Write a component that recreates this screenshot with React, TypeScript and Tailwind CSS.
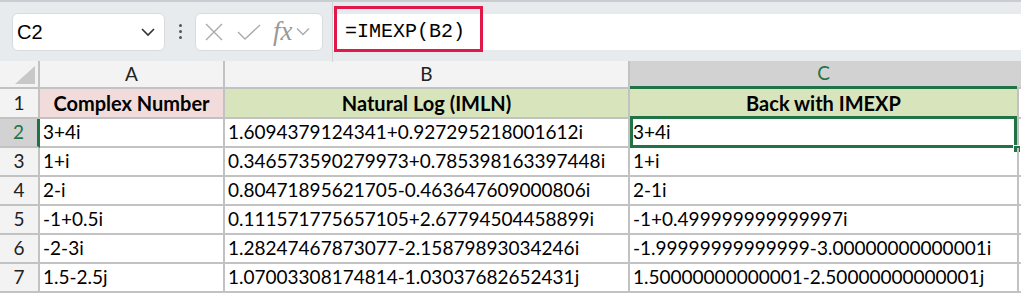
import React from 'react';

const rows = [
  ['3+4i', '1.6094379124341+0.927295218001612i', '3+4i'],
  ['1+i', '0.346573590279973+0.785398163397448i', '1+i'],
  ['2-i', '0.80471895621705-0.463647609000806i', '2-1i'],
  ['-1+0.5i', '0.111571775657105+2.67794504458899i', '-1+0.499999999999997i'],
  ['-2-3i', '1.28247467873077-2.15879893034246i', '-1.99999999999999-3.00000000000001i'],
  ['1.5-2.5j', '1.07003308174814-1.03037682652431j', '1.50000000000001-2.50000000000001j'],
];

const cellFont = { fontFamily: 'Lato, "Open Sans", sans-serif' };

const Toolbar: React.FC = () => (
  <div className="h-[61px] bg-[#e8ebee] border-t-2 border-[#c9ccd0] flex items-center relative">
    <div className="ml-[12px] w-[153px] h-[38px] bg-white rounded-[6px] border border-[#d9dcdf] flex items-center justify-between pl-[4px] pr-[8px]">
      <span className="text-[20px] text-black" style={{ fontFamily: '"Liberation Sans", sans-serif' }}>C2</span>
      <svg width="16" height="10" viewBox="0 0 16 10" fill="none" stroke="#333" strokeWidth="1.6">
        <path d="M2 2l6 6 6-6" />
      </svg>
    </div>
    <div className="w-[30px] flex flex-col items-center gap-[3px]">
      <span className="w-[3px] h-[3px] rounded-full bg-[#555]" />
      <span className="w-[3px] h-[3px] rounded-full bg-[#555]" />
      <span className="w-[3px] h-[3px] rounded-full bg-[#555]" />
    </div>
    <div className="w-[128px] h-[38px] bg-white rounded-[6px] border border-[#d9dcdf] flex items-center pl-[9px] gap-[14px]">
      <svg width="18" height="18" viewBox="0 0 18 18" stroke="#aaa" strokeWidth="1.4" fill="none">
        <path d="M1 1l16 16M17 1L1 17" />
      </svg>
      <svg width="24" height="18" viewBox="0 0 24 18" stroke="#aaa" strokeWidth="1.4" fill="none">
        <path d="M1 9l7 7L23 2" />
      </svg>
      <div className="flex items-center gap-[3px] -ml-[2px]">
        <span className="text-[27px] italic text-[#999] leading-none" style={{ fontFamily: '"Liberation Serif", serif' }}>fx</span>
        <svg width="14" height="9" viewBox="0 0 14 9" stroke="#aaa" strokeWidth="1.4" fill="none">
          <path d="M1 1.5l6 6 6-6" />
        </svg>
      </div>
    </div>
    <div className="ml-[9px] w-[1px] h-[61px] bg-[#d0d3d6]" />
    <div className="flex-1 h-[36px] bg-white flex items-center relative">
      <div className="absolute left-[1px] top-[-8px] w-[149px] h-[46px] border-[3px] border-[#e0194a]" />
      <span className="ml-[12px] text-[20px] text-black" style={{ fontFamily: '"Liberation Mono", monospace' }}>=IMEXP(B2)</span>
    </div>
  </div>
);

const colW = ['w-[185px]', 'w-[405px]', 'w-[387px]'];

const App: React.FC = () => {
  return (
    <div className="w-[1021px] h-[298px] overflow-hidden bg-white">
      <Toolbar />
      {/* column headers */}
      <div className="flex h-[28px] bg-[#f3f3f3]" style={cellFont}>
        <div className="w-[40px] border-r-2 border-b-2 border-[#c2c2c2] relative">
          <svg className="absolute left-[15px] top-[5px]" width="20" height="18" viewBox="0 0 20 18">
            <path d="M20 0V18H0Z" fill="#c8c8c8" />
          </svg>
        </div>
        <div className={`${colW[0]} border-r-2 border-b-2 border-[#c2c2c2] flex items-center justify-center text-[19px] text-[#222]`}>A</div>
        <div className={`${colW[1]} border-r-2 border-b-2 border-[#c2c2c2] flex items-center justify-center text-[19px] text-[#222]`}>B</div>
        <div className={`${colW[2]} bg-[#d2d2d2] border-b-[3px] border-[#217346] flex items-center justify-center text-[19px] text-[#217346]`}>C</div>
        <div className="w-[4px] bg-[#d2d2d2] border-b-2 border-[#c2c2c2]" />
        <div className="flex-1 border-b-2 border-[#c2c2c2]" />
      </div>
      {/* header row */}
      <div className="flex h-[30px]" style={cellFont}>
        <div className="w-[40px] bg-[#f3f3f3] border-r-2 border-b-2 border-[#c2c2c2] flex items-center justify-center text-[19px] text-[#222]">1</div>
        <div className={`${colW[0]} bg-[#f2dcdb] border-r-2 border-b-2 border-[#c2c2c2] flex items-center justify-center text-[20px] font-bold text-black`}>Complex Number</div>
        <div className={`${colW[1]} bg-[#d8e4bc] border-r-2 border-b-2 border-[#c2c2c2] flex items-center justify-center text-[20px] font-bold text-black`}>Natural Log (IMLN)</div>
        <div className={`${colW[2]} bg-[#d8e4bc] border-b-[3px] border-[#217346] flex items-center justify-center text-[20px] font-bold text-black`}>Back with IMEXP</div>
        <div className="w-[4px] border-l-2 border-b-2 border-[#c2c2c2]" />
        <div className="flex-1" />
      </div>
      {rows.map((r, i) => {
        const sel = i === 0;
        return (
          <div key={i} className="flex h-[29px]" style={cellFont}>
            <div
              className={`w-[40px] border-b-2 flex items-center justify-center text-[19px] ${
                sel ? 'bg-[#d2d2d2] text-[#217346] border-r-[3px] border-r-[#217346] border-b-[#c2c2c2]' : 'bg-[#f3f3f3] text-[#222] border-r-2 border-[#c2c2c2]'
              }`}
            >
              {i + 2}
            </div>
            <div className={`${colW[0]} border-r-2 border-b-2 border-[#c2c2c2] flex items-center pl-[3px] text-[19px] text-black whitespace-nowrap`}>{r[0]}</div>
            <div className={`${colW[1]} border-r-2 border-b-2 border-[#c2c2c2] flex items-center pl-[3px] text-[19px] text-black whitespace-nowrap`}>{r[1]}</div>
            <div
              className={`${colW[2]} flex items-center text-[19px] text-black whitespace-nowrap ${
                sel ? 'border-[3px] border-t-0 border-[#217346] pl-0' : 'pl-[3px] border-b-2 border-[#c2c2c2]'
              }`}
            >
              {r[2]}
            </div>
            <div className={`w-[4px] border-l-2 border-[#c2c2c2] relative ${sel ? '' : 'border-b-2'}`}>
              {sel && <span className="absolute left-[-6px] bottom-[-5px] w-[8px] h-[8px] bg-[#217346] border border-white" />}
            </div>
            <div className="flex-1" />
          </div>
        );
      })}
    </div>
  );
};

export default App;
